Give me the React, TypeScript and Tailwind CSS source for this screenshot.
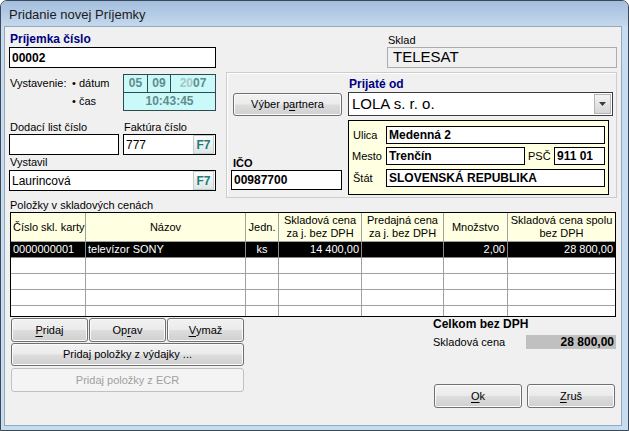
import React from 'react'

const btn =
    'flex items-center justify-center rounded-[3px] border border-[#707070] bg-[linear-gradient(to_bottom,#f2f2f2_0%,#ebebeb_48%,#dddddd_52%,#cfcfcf_100%)] shadow-[inset_0_0_0_1px_#fbfbfb] text-[11px] text-black'

function U({ children }: { children: React.ReactNode }) {
    return <span className="underline underline-offset-[2px]">{children}</span>
}

function F7() {
    return (
        <div className="mr-[1px] flex h-[19px] w-[21px] items-center justify-center border border-[#c4cccc] bg-[linear-gradient(to_bottom,#fafcfc,#dde6e6)] text-[12px] font-bold text-[#1f7a7a]">
            F7
        </div>
    )
}

function DateBox() {
    return (
        <div className="h-[37px] w-[93px] border border-[#2f4b4b] bg-[#c9f9f9] text-[12px] font-bold leading-[17px] text-[#5f8c8c]">
            <div className="flex h-[18px] border-b border-[#2f4b4b]">
                <div className="w-[24px] border-r border-[#2f4b4b] text-center">05</div>
                <div className="w-[23px] border-r border-[#2f4b4b] text-center">09</div>
                <div className="flex-1 text-center">
                    <span className="text-[#a9c6c6]">20</span>07
                </div>
            </div>
            <div className="text-center">10:43:45</div>
        </div>
    )
}

const headers: { lines: string[]; left?: boolean }[] = [
    { lines: ['Číslo skl. karty'], left: true },
    { lines: ['Názov'] },
    { lines: ['Jedn.'] },
    { lines: ['Skladová cena', 'za j. bez DPH'] },
    { lines: ['Predajná cena', 'za j. bez DPH'] },
    { lines: ['Množstvo'] },
    { lines: ['Skladová cena spolu', 'bez DPH'] },
]

const rowAlign = ['text-left', 'text-left', 'text-center', 'text-right', 'text-right', 'text-right', 'text-right']
const dataRow = ['0000000001', 'televízor SONY', 'ks', '14 400,00', '', '2,00', '28 800,00']

function ItemsTable() {
    const emptyRows = [0, 1, 2]
    return (
        <div className="ml-[5px] w-[606px] border border-black bg-white text-[11px]">
            <div className="grid grid-cols-[75px_160px_33px_83px_82px_64px_107px]">
                {/* Header */}
                {headers.map((h, i) => (
                    <div
                        key={'h' + i}
                        className={`flex h-[29px] flex-col justify-center border-b border-[#a0a0a0] bg-[#ffffe1] leading-[13px] ${i < 6 ? 'border-r' : ''} ${h.left ? 'items-start pl-[2px]' : 'items-center'}`}
                    >
                        {h.lines.map((l) => (
                            <span key={l}>{l}</span>
                        ))}
                    </div>
                ))}

                {/* Selected row */}
                {dataRow.map((v, i) => (
                    <div
                        key={'d' + i}
                        className={`h-[16px] truncate border-b border-[#8a8a8a] bg-black px-[2px] leading-[15px] text-white ${rowAlign[i]} ${i < 6 ? 'border-r' : ''}`}
                    >
                        {v}
                    </div>
                ))}

                {/* Empty rows */}
                {emptyRows.map((r) =>
                    dataRow.map((_, i) => (
                        <div
                            key={'e' + r + '-' + i}
                            className={`h-[16px] border-b border-[#a0a0a0] ${i < 6 ? 'border-r' : ''}`}
                        />
                    ))
                )}
                {dataRow.map((_, i) => (
                    <div key={'l' + i} className={`h-[10px] border-[#a0a0a0] ${i < 6 ? 'border-r' : ''}`} />
                ))}
            </div>
        </div>
    )
}

export default function App() {
    return (
        <div className="h-[431px] w-[629px] overflow-hidden bg-white">
            <div className="flex h-[431px] w-[629px] flex-col rounded-t-[7px] border border-[#3a4858] bg-[#c7dcee] font-['Liberation_Sans',Arial,sans-serif] text-black">
                {/* Title bar */}
                <div className="flex h-[25px] items-center rounded-t-[6px] bg-[linear-gradient(to_bottom,#a3bedd,#c4d8ed)] pl-[8px] pt-[2px] text-[13px] text-[#1b1b1b]">
                    Pridanie novej Príjemky
                </div>

                <div className="flex flex-1 pb-[4px] pl-[3px] pr-[6px]">
                    <div className="flex-1 border border-[#93a8bd] bg-[#f0f0f0]">
                        {/* Top section */}
                        <div className="flex">
                            {/* Left column */}
                            <div className="ml-[4px] w-[207px]">
                                <div className="mt-[5px] h-[14px] pl-[1px] text-[12px] font-bold leading-[14px] text-[#000080]">
                                    Príjemka číslo
                                </div>
                                <div className="mt-[1px] flex h-[21px] items-center border border-black bg-white pl-[2px] text-[12px] font-bold">
                                    00002
                                </div>

                                <div className="mt-[6px] flex h-[37px]">
                                    <div className="w-[114px] text-[11px]">
                                        <div className="flex h-[18px] items-center">
                                            <span className="w-[63px] pl-[1px]">Vystavenie:</span>
                                            <span>• dátum</span>
                                        </div>
                                        <div className="flex h-[18px] items-center pl-[63px]">• čas</div>
                                    </div>
                                    <DateBox />
                                </div>

                                <div className="mt-[9px] flex h-[14px] items-center text-[11px]">
                                    <span className="w-[114px] pl-[1px]">Dodací list číslo</span>
                                    <span className="pl-[1px]">Faktúra číslo</span>
                                </div>
                                <div className="flex h-[21px]">
                                    <div className="w-[110px] border border-black bg-white" />
                                    <div className="ml-[4px] flex w-[93px] items-center border border-black bg-white">
                                        <span className="flex-1 pl-[2px] text-[12px]">777</span>
                                        <F7 />
                                    </div>
                                </div>

                                <div className="flex h-[15px] items-center pl-[1px] text-[11px]">Vystavil</div>
                                <div className="flex h-[21px] w-[207px] items-center border border-black bg-white">
                                    <span className="flex-1 pl-[2px] text-[12px]">Laurincová</span>
                                    <F7 />
                                </div>
                            </div>

                            {/* Right column */}
                            <div className="ml-[10px] w-[391px]">
                                <div className="mt-[6px] h-[14px] pl-[162px] text-[11px] leading-[14px]">Sklad</div>
                                <div className="ml-[161px] flex h-[21px] w-[230px] items-center border border-[#acacac] bg-[#f0f0f0] pl-[5px] text-[15px]">
                                    TELESAT
                                </div>

                                {/* Partner group */}
                                <div className="mt-[4px] flex h-[126px] border border-[#cdcdcd] shadow-[inset_1px_1px_0_#ffffff]">
                                    <div className="ml-[4px] w-[111px]">
                                        <div className={`${btn} ml-[2px] mt-[20px] h-[23px] w-[109px]`}>
                                            Výber p<U>a</U>rtnera
                                        </div>
                                        <div className="ml-[2px] mt-[40px] h-[14px] text-[11px] font-bold leading-[14px]">IČO</div>
                                        <div className="flex h-[20px] w-[111px] items-center border border-black bg-white pl-[2px] text-[12px] font-bold">
                                            00987700
                                        </div>
                                    </div>

                                    <div className="ml-[6px] w-[265px]">
                                        <div className="mt-[4px] h-[14px] pl-[1px] text-[12px] font-bold leading-[14px] text-[#000080]">
                                            Prijaté od
                                        </div>
                                        <div className="mt-[1px] flex h-[24px] w-[265px] items-center border border-[#3c3c3c] bg-white">
                                            <span className="flex-1 pl-[3px] text-[15px]">LOLA s. r. o.</span>
                                            <div className="mr-[1px] flex h-[20px] w-[17px] items-center justify-center border border-[#b5b5b5] bg-[linear-gradient(to_bottom,#f3f3f3,#d6d6d6)]">
                                                <svg width="7" height="4" viewBox="0 0 7 4">
                                                    <path d="M0 0h7L3.5 4z" fill="#3a3a3a" />
                                                </svg>
                                            </div>
                                        </div>

                                        {/* Address */}
                                        <div className="mt-[4px] h-[75px] w-[261px] border border-black bg-[#ffffe1] text-[11px]">
                                            <div className="mt-[5px] flex h-[18px] items-center">
                                                <span className="w-[37px] pl-[4px]">Ulica</span>
                                                <div className="flex h-[18px] w-[219px] items-center border border-black bg-white pl-[2px] text-[12px] font-bold">
                                                    Medenná 2
                                                </div>
                                            </div>
                                            <div className="mt-[3px] flex h-[18px] items-center">
                                                <span className="w-[37px] pl-[3px]">Mesto</span>
                                                <div className="flex h-[18px] w-[139px] items-center border border-black bg-white pl-[2px] text-[12px] font-bold">
                                                    Trenčín
                                                </div>
                                                <span className="w-[29px] pl-[3px]">PSČ</span>
                                                <div className="flex h-[18px] w-[51px] items-center border border-black bg-white pl-[2px] text-[12px] font-bold">
                                                    911 01
                                                </div>
                                            </div>
                                            <div className="mt-[4px] flex h-[18px] items-center">
                                                <span className="w-[37px] pl-[4px]">Štát</span>
                                                <div className="flex h-[18px] w-[219px] items-center border border-black bg-white pl-[2px] text-[12px] font-bold">
                                                    SLOVENSKÁ REPUBLIKA
                                                </div>
                                            </div>
                                        </div>
                                    </div>
                                </div>
                            </div>
                        </div>

                        {/* Items */}
                        <div className="ml-[5px] h-[14px] text-[11px] leading-[14px]">Položky v skladových cenách</div>
                        <ItemsTable />

                        {/* Bottom section */}
                        <div className="flex">
                            <div className="ml-[6px] w-[233px]">
                                <div className="mt-[1px] flex h-[24px] gap-[1px]">
                                    <div className={`${btn} w-[77px]`}>
                                        <U>P</U>ridaj
                                    </div>
                                    <div className={`${btn} w-[77px]`}>
                                        Op<U>r</U>av
                                    </div>
                                    <div className={`${btn} w-[77px]`}>
                                        <U>V</U>ymaž
                                    </div>
                                </div>
                                <div className={`${btn} mt-[1px] h-[23px] w-[233px]`}>Pridaj položky z výdajky ...</div>
                                <div className="mt-[2px] flex h-[24px] w-[233px] items-center justify-center rounded-[3px] border border-[#bfc2c4] bg-[#f4f4f4] text-[11px] text-[#a0a0a0]">
                                    Pridaj položky z ECR
                                </div>
                            </div>

                            <div className="ml-[189px] w-[183px]">
                                <div className="h-[14px] text-[12px] font-bold leading-[14px]">Celkom bez DPH</div>
                                <div className="mt-[4px] flex h-[14px] items-center">
                                    <span className="w-[93px] text-[11px]">Skladová cena</span>
                                    <div className="flex h-[14px] w-[90px] items-center justify-end bg-[#c0c0c0] pr-[2px] text-[12px] font-bold">
                                        28 800,00
                                    </div>
                                </div>
                                <div className="ml-[1px] mt-[35px] flex gap-[5px]">
                                    <div className={`${btn} h-[24px] w-[88px]`}>
                                        <U>O</U>k
                                    </div>
                                    <div className={`${btn} h-[24px] w-[88px]`}>
                                        <U>Z</U>ruš
                                    </div>
                                </div>
                            </div>
                        </div>
                    </div>
                </div>
            </div>
        </div>
    )
}
